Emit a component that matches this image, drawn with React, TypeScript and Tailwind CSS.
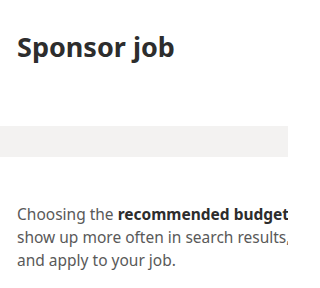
import React from "react";

const App = () => {
  return (
    <div className="relative w-[288px] h-[288px] overflow-hidden bg-white" style={{ fontFamily: '"Noto Sans", sans-serif' }}>
      <div className="px-[17px] pt-[29px] h-[126px]">
        <h1 className="text-[27px] font-bold leading-[36px] text-[#2d2d2d]">Sponsor job</h1>
      </div>
      <div className="h-[31px] bg-[#f3f2f1]" />
      <div className="px-[17px] pt-[46px]">
        <p className="whitespace-nowrap text-[15.5px] leading-[23px] text-[#595959]">
          Choosing the <span className="font-bold text-[#2d2d2d]">recommended budget</span> helps your job
          <br />
          show up more often in search results, so more candidates can find
          <br />
          and apply to your job.
        </p>
      </div>
    </div>
  );
};

export default App;
